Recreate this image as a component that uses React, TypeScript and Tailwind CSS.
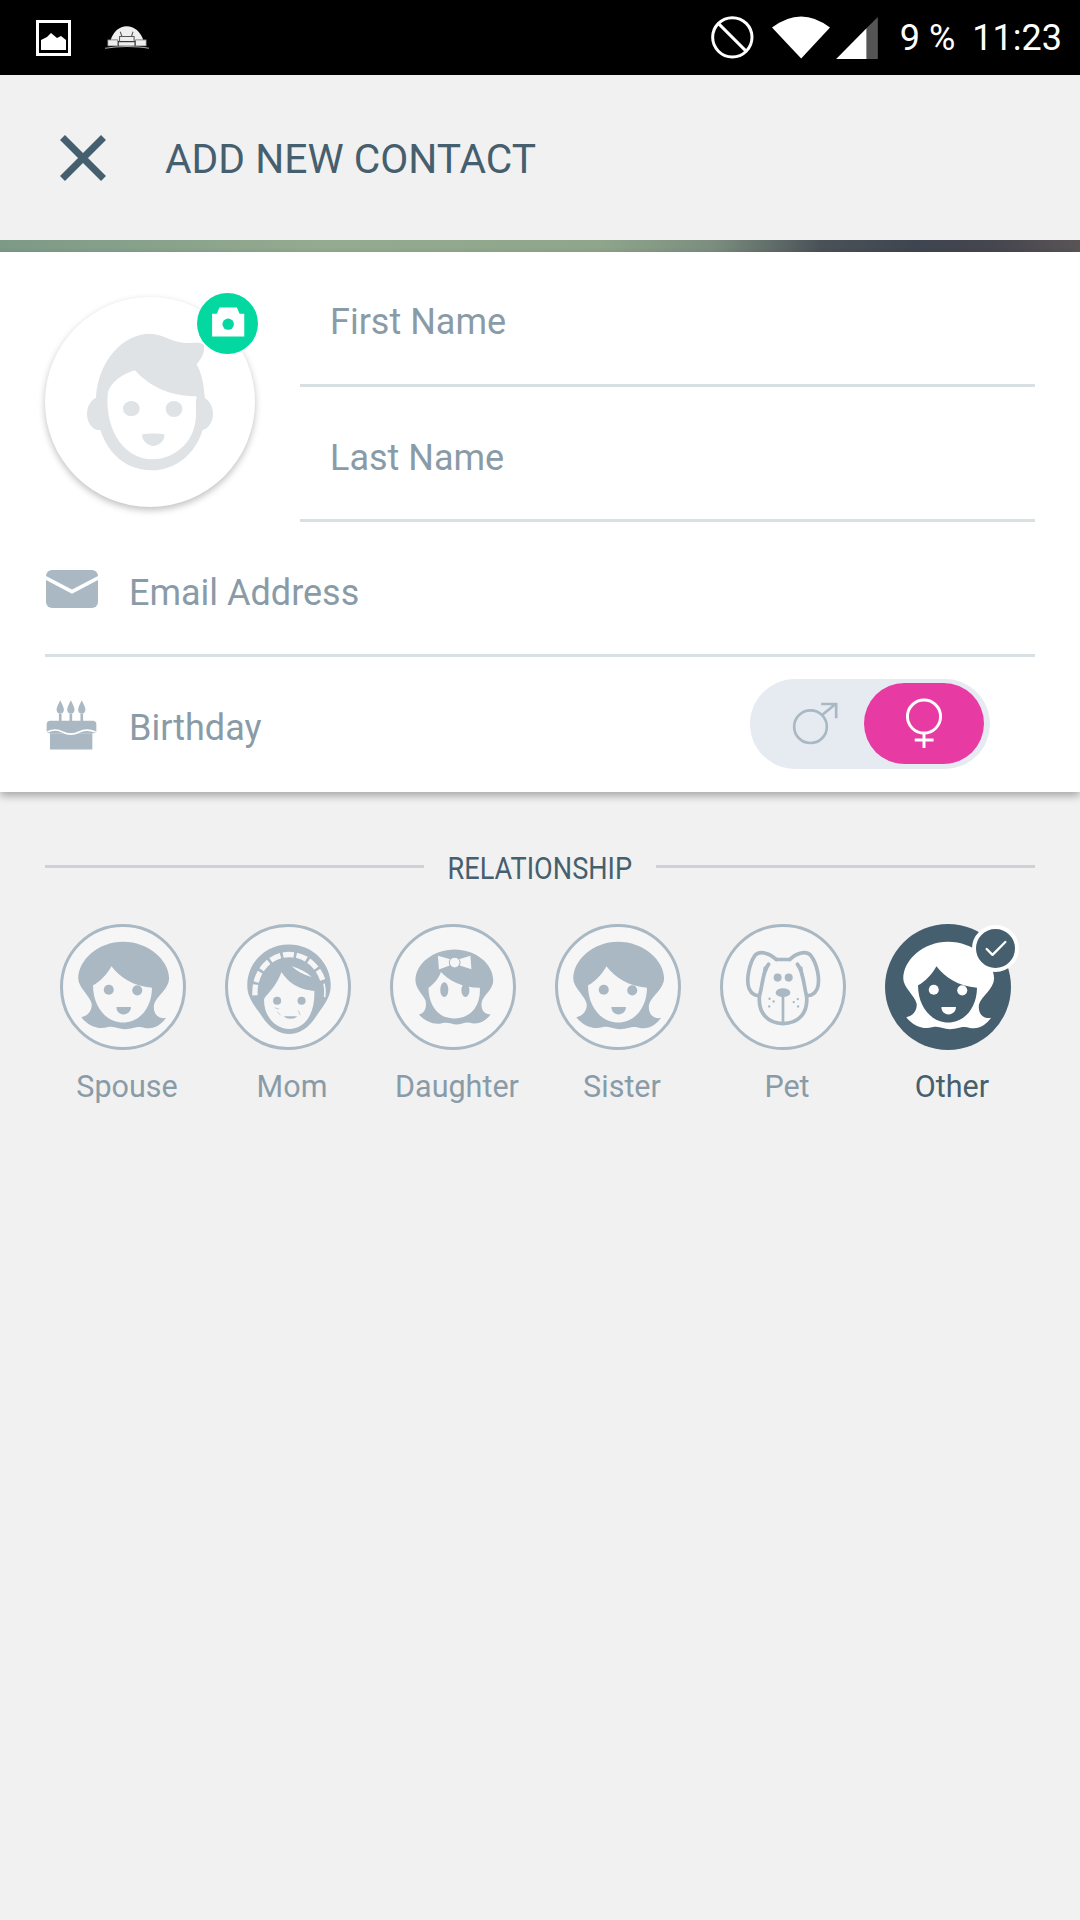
import { Check } from "lucide-react";

const relations = [
    { label: "Spouse", icon: "woman" },
    { label: "Mom", icon: "mom" },
    { label: "Daughter", icon: "daughter" },
    { label: "Sister", icon: "woman" },
    { label: "Pet", icon: "pet" },
];

function WomanFace({ hair, face, viewBox }: { hair: string; face: string; viewBox: string }) {
    return (
        <svg viewBox={viewBox} className="h-full w-full">
            <path
                fill={hair}
                d="M280 125C205 125 146 180 146 235C146 262 180 285 186 310C188 330 175 347 155 350C175 375 205 388 232 380C255 375 265 386 285 386C310 386 320 375 345 382C370 388 395 372 408 352C385 357 368 340 372 312C378 290 417 265 417 235C417 180 355 125 280 125Z"
            />
            <path
                fill={face}
                d="M245 198C270 230 310 258 366 262C366 320 330 366 280 366C230 366 190 320 190 255C210 245 232 222 245 198Z"
            />
            <circle cx="237" cy="268" r="15" fill={hair} />
            <circle cx="322" cy="270" r="15" fill={hair} />
            <path fill={hair} d="M260 320H303C304 332 294 342 281 342C268 342 259 332 260 320Z" />
        </svg>
    );
}

function MomFace() {
    return (
        <svg viewBox="596 81 357 358" className="h-full w-full">
            <path
                fill="#a9b8c3"
                d="M777 133C705 133 653 190 653 255C653 290 670 310 695 345C720 385 750 400 778 400C806 400 836 385 860 345C885 310 902 290 902 255C902 190 850 133 777 133Z"
            />
            <path
                fill="none"
                stroke="#f6f6f6"
                strokeWidth="16"
                strokeDasharray="32 8"
                d="M676 285C672 215 720 163 778 163C830 163 866 200 879 242"
            />
            <path fill="none" stroke="#f6f6f6" strokeWidth="5" d="M882 250C886 265 886 275 884 290" />
            <path
                fill="#f6f6f6"
                d="M755 215C785 260 820 268 853 270C856 340 825 385 778 385C735 385 703 345 703 300C703 285 735 270 755 215Z"
            />
            <path fill="#a9b8c3" d="M755 213C800 205 845 215 868 245L853 272C815 268 780 250 755 213Z" />
            <path fill="#f6f6f6" d="M785 197C810 205 830 215 845 230C820 222 800 212 785 197Z" />
            <circle cx="742" cy="301" r="12" fill="#a9b8c3" />
            <circle cx="815" cy="301" r="12" fill="#a9b8c3" />
            <path fill="#a9b8c3" d="M762 347H802C795 357 770 357 762 347Z" />
            <path
                fill="none"
                stroke="#a9b8c3"
                strokeWidth="2"
                d="M743 334L752 344M805 330L811 344M735 322L748 326"
            />
        </svg>
    );
}

function DaughterFace() {
    return (
        <svg viewBox="69 81 358 358" className="h-full w-full">
            <path
                fill="#a9b8c3"
                d="M253 148C190 148 136 190 136 240C136 265 160 285 166 300C170 320 165 338 146 342C165 362 190 374 215 368C235 364 245 372 258 372C275 372 285 362 305 368C325 372 348 360 360 342C340 342 328 325 335 300C345 280 368 265 368 240C368 190 315 148 253 148Z"
            />
            <path
                fill="#f6f6f6"
                d="M212 215C235 240 275 262 328 262C332 315 300 354 252 354C205 354 175 315 175 262C190 252 205 235 212 215Z"
            />
            <ellipse cx="222" cy="268" rx="12" ry="22" fill="#a9b8c3" />
            <ellipse cx="285" cy="270" rx="12" ry="20" fill="#a9b8c3" />
            <path fill="#f6f6f6" d="M203 167L240 177H266L300 167L303 207L266 195H240L206 208Z" />
            <circle cx="253" cy="187" r="16" fill="#f6f6f6" stroke="#a9b8c3" strokeWidth="3" />
        </svg>
    );
}

function PetFace() {
    return (
        <svg viewBox="69 81 358 358" className="h-full w-full">
            <g fill="none" stroke="#a9b8c3" strokeWidth="11" strokeLinejoin="round" strokeLinecap="round">
                <path d="M228 178H268" />
                <path d="M228 178C210 160 180 150 165 165C147 190 137 240 147 265C155 283 170 288 178 284C186 265 186 215 205 192" />
                <path d="M268 178C285 160 315 150 330 165C350 190 360 240 350 265C342 283 327 288 318 284C311 265 310 215 291 192" />
                <path d="M178 284C172 340 205 369 248 369C292 369 325 340 318 284" />
                <path d="M248 285V366" strokeWidth="8" />
            </g>
            <path fill="#a9b8c3" d="M205 192L190 200L180 270L178 284C188 265 186 215 205 192Z" />
            <path fill="#a9b8c3" d="M291 192L306 200L316 270L318 284C310 265 310 215 291 192Z" />
            <circle cx="232" cy="232" r="12" fill="#a9b8c3" />
            <circle cx="265" cy="232" r="12" fill="#a9b8c3" />
            <ellipse cx="248" cy="277" rx="22" ry="13" fill="#a9b8c3" />
            <g fill="#a9b8c3">
                <circle cx="208" cy="295" r="3.5" />
                <circle cx="220" cy="303" r="3.5" />
                <circle cx="207" cy="318" r="3.5" />
                <circle cx="280" cy="305" r="3.5" />
                <circle cx="292" cy="296" r="3.5" />
                <circle cx="293" cy="318" r="3.5" />
            </g>
        </svg>
    );
}

function RelationIcon({ icon }: { icon: string }) {
    if (icon === "mom") return <MomFace />;
    if (icon === "daughter") return <DaughterFace />;
    if (icon === "pet") return <PetFace />;
    return <WomanFace hair="#a9b8c3" face="#f6f6f6" viewBox="101 81 357 358" />;
}

function StatusBar() {
    return (
        <div className="flex h-[75px] items-center bg-black pl-[36px] pr-[18px] text-[36px] text-white">
            <svg viewBox="0 0 35 36" className="h-[36px] w-[35px]">
                <rect x="1.5" y="1.5" width="32" height="33" fill="none" stroke="#fff" strokeWidth="3" />
                <path fill="#fff" d="M5 30V20L11 17L15 13L21 18L25 16L30 20V30Z" />
            </svg>
            <svg viewBox="300 78 134 74" className="ml-[33px] h-[25px] w-[46px]">
                <path fill="#eee" d="M318 125C325 98 345 82 366 82C388 82 408 98 416 125Z" />
                <path fill="none" stroke="#555" strokeWidth="3" d="M345 112H388V128H345ZM352 112L347 98M380 112L385 98" />
                <path fill="#eee" stroke="#555" strokeWidth="2" d="M310 122H340V140H310ZM392 122H424V140H392ZM342 128H390V140H342Z" />
                <path fill="none" stroke="#aaa" strokeWidth="3" d="M302 147C340 140 395 140 432 147" />
            </svg>
            <svg viewBox="90 48 129 129" className="ml-auto h-[43px] w-[43px]">
                <circle cx="154" cy="112" r="59" fill="none" stroke="#fff" strokeWidth="9" />
                <path stroke="#fff" strokeWidth="9" d="M112 70L196 154" />
            </svg>
            <svg viewBox="272 48 175 128" className="ml-[18px] h-[43px] w-[58px]">
                <path fill="#fff" d="M360 175L272 82Q360 15 447 82Z" />
            </svg>
            <svg viewBox="465 50 125 126" className="ml-[6px] h-[42px] w-[42px]">
                <path fill="#555" d="M590 50V176H556V84Z" />
                <path fill="#fff" d="M465 176L556 84V176Z" />
            </svg>
            <span className="ml-[22px]">9 %</span>
            <span className="ml-[17px]">11:23</span>
        </div>
    );
}

function AvatarPicker() {
    return (
        <div className="relative mt-[45px] h-[210px] w-[210px] shrink-0 rounded-full bg-white shadow-[0_3px_7px_rgba(0,0,0,0.25)]">
            <svg viewBox="75 80 630 630" className="h-full w-full">
                <ellipse cx="240" cy="430" rx="39" ry="50" fill="#dfe3e6" />
                <ellipse cx="540" cy="430" rx="39" ry="50" fill="#dfe3e6" />
                <path
                    fill="#dfe3e6"
                    d="M228 380C235 270 310 190 390 190C430 190 460 220 510 218C530 218 545 215 552 225C555 245 545 265 530 282C545 310 555 345 557 430C550 530 480 600 395 600C300 600 225 520 228 380Z"
                />
                <path
                    fill="#fff"
                    d="M263 372C270 335 310 310 345 300C390 350 450 378 530 378C526 395 528 415 528 432C528 510 470 567 395 567C320 567 255 490 263 372Z"
                />
                <ellipse cx="334" cy="415" rx="25" ry="23" fill="#dfe3e6" />
                <ellipse cx="462" cy="416" rx="25" ry="24" fill="#dfe3e6" />
                <path fill="#dfe3e6" d="M367 492C380 489 420 489 433 492C436 512 415 527 400 527C385 527 364 512 367 492Z" />
            </svg>
            <div className="absolute -right-[3px] -top-[4px] h-[61px] w-[61px] rounded-full bg-[#03d8a0]">
                <svg viewBox="531 70 182 182" className="h-full w-full">
                    <path fill="#fff" d="M576 132H590L598 113H650L658 132H672V200H576Z" />
                    <circle cx="624" cy="163" r="17" fill="#03d8a0" />
                </svg>
            </div>
        </div>
    );
}

function GenderToggle() {
    return (
        <div className="mb-[2px] ml-auto mr-[90px] flex h-[90px] w-[240px] items-center justify-end rounded-full bg-[#e6ebf2] pr-[6px]">
            <svg viewBox="215 120 140 135" className="mr-[26px] h-[45px] w-[47px]">
                <circle cx="273" cy="197" r="49" fill="none" stroke="#a9b8c3" strokeWidth="8" />
                <path fill="none" stroke="#a9b8c3" strokeWidth="8" d="M308 162L349 128M305 129H350V172" />
            </svg>
            <div className="flex h-[81px] w-[120px] items-center justify-center rounded-full bg-[#e83aa3]">
                <svg viewBox="550 108 120 160" className="h-[53px] w-[40px]">
                    <circle cx="610" cy="167" r="50" fill="none" stroke="#fff" strokeWidth="9" />
                    <path fill="none" stroke="#fff" strokeWidth="9" d="M610 217V262M582 238H639" />
                </svg>
            </div>
        </div>
    );
}

export default function App() {
    return (
        <div className="flex min-h-[1920px] w-[1080px] flex-col bg-[#f1f1f1] font-['Roboto',sans-serif]">
            <StatusBar />

            {/* Header */}
            <div className="flex h-[165px] items-center pl-[60px] text-[#465f6e]">
                <svg viewBox="0 0 46 46" className="h-[46px] w-[46px]">
                    <path fill="none" stroke="#465f6e" strokeWidth="7" d="M2.5 2.5L43.5 43.5M43.5 2.5L2.5 43.5" />
                </svg>
                <h1 className="ml-[59px] mt-[5px] text-[40.75px] font-normal">ADD NEW CONTACT</h1>
            </div>
            <div className="h-3 bg-[linear-gradient(90deg,#7d9a87_0%,#94ab90_30%,#90a68c_55%,#7c8e7f_66%,#4a5258_76%,#3f4550_85%,#45464f_92%,#5a5456_100%)]" />

            {/* Form card */}
            <div className="flex h-[540px] flex-col bg-white text-[36px] text-[#8a9ba8] shadow-[0_4px_8px_rgba(0,0,0,0.3)]">
                <div className="flex gap-[45px] px-[45px]">
                    <AvatarPicker />
                    <div className="flex-1">
                        <div className="flex h-[135px] items-center border-b-[3px] border-[#d9e0e4] pl-[30px] pt-[7px]">First Name</div>
                        <div className="flex h-[135px] items-center border-b-[3px] border-[#d9e0e4] pl-[30px] pt-[9px]">Last Name</div>
                    </div>
                </div>
                <div className="mx-[45px] flex h-[135px] items-center border-b-[3px] border-[#d9e0e4] pt-[9px]">
                    <svg viewBox="78 90 156 114" className="mb-[7px] ml-[1px] h-[38px] w-[52px]">
                        <rect x="78" y="90" width="156" height="114" rx="18" fill="#a9b8c3" />
                        <path fill="none" stroke="#fff" strokeWidth="11" d="M74 112L156 155L238 112" />
                    </svg>
                    <span className="ml-[31px]">Email Address</span>
                </div>
                <div className="ml-[45px] flex flex-1 items-center">
                    <svg viewBox="80 478 154 150" className="ml-[1px] h-[50px] w-[51px]">
                        <g fill="#a9b8c3">
                            <path d="M123 478C130 492 134 500 134 507C134 514 130 519 123 519C116 519 112 514 112 507C112 500 116 492 123 478Z" />
                            <path d="M155 478C162 492 166 500 166 507C166 514 162 519 155 519C148 519 144 514 144 507C144 500 148 492 155 478Z" />
                            <path d="M188 478C195 492 199 500 199 507C199 514 195 519 188 519C181 519 177 514 177 507C177 500 181 492 188 478Z" />
                            <path d="M119 520H127V542H119ZM151 520H159V542H151ZM184 520H192V542H184Z" />
                            <path d="M92 540H222C228 540 232 544 232 550V570C232 576 228 578 222 578H92C86 578 82 576 82 570V550C82 544 86 540 92 540Z" />
                            <path d="M92 578H220V627H92Z" />
                        </g>
                        <path fill="none" stroke="#fff" strokeWidth="5" d="M84 574C100 566 115 566 130 574C145 582 165 582 180 574C195 566 210 566 230 574" />
                    </svg>
                    <span className="ml-[32px] mt-[6px]">Birthday</span>
                    <GenderToggle />
                </div>
            </div>

            {/* Relationship */}
            <div className="mt-[50px] flex items-center px-[45px]">
                <div className="h-[3px] flex-1 bg-[#ced2d6]" />
                <div className="mx-[25px] flex w-[182px] justify-center">
                    <span className="translate-y-[2px] scale-x-[0.848] whitespace-nowrap text-[32px] text-[#465f6e]">RELATIONSHIP</span>
                </div>
                <div className="h-[3px] flex-1 bg-[#ced2d6]" />
            </div>

            <div className="mt-[34px] flex gap-[39px] pl-[60px] text-[30.5px] text-[#8a9ba8]">
                {relations.map((r) => (
                    <div key={r.label} className="w-[126px]">
                        <div className="h-[126px] w-[126px] rounded-full border-[3px] border-[#a9b8c3] bg-[#f6f6f6]">
                            <RelationIcon icon={r.icon} />
                        </div>
                        <div className="ml-2 mt-[14px] flex justify-center whitespace-nowrap">{r.label}</div>
                    </div>
                ))}
                <div className="w-[126px]">
                    <div className="relative h-[126px] w-[126px] rounded-full bg-[#465f6e]">
                        <WomanFace hair="#fff" face="#465f6e" viewBox="92 72 375 376" />
                        <div className="absolute -right-[8px] top-px flex h-[47px] w-[47px] items-center justify-center rounded-full border-[4px] border-white bg-[#465f6e]">
                            <Check className="h-[28px] w-[28px] text-white" strokeWidth={2} />
                        </div>
                    </div>
                    <div className="ml-2 mt-[14px] flex justify-center whitespace-nowrap text-[#465f6e]">Other</div>
                </div>
            </div>
        </div>
    );
}
